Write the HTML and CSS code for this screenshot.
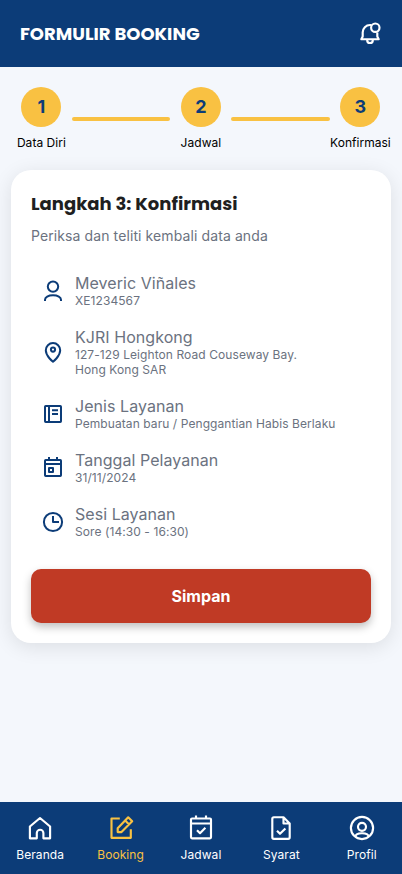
FILE: index.html
```html
<!DOCTYPE html>
<html lang="id">
<head>
<meta charset="utf-8">
<meta name="viewport" content="width=device-width, initial-scale=1">
<title>Formulir Booking</title>
<link rel="stylesheet" href="styles.css">
</head>
<body>
<div class="app">
  <header class="header">
    <h1 class="header-title">FORMULIR BOOKING</h1>
    <svg class="icon bell" viewBox="0 0 24 24"><path d="M13.400 3H12A7.300 7.300 0 0 0 4.700 10.300V14.600L3.300 17.200h17.400L19.300 14.600v-4M9.200 17.400v.8a2.800 2.800 0 0 0 5.600 0v-.8"/><circle cx="17.300" cy="5.700" r="4.200"/></svg>
  </header>
  <main class="main">
    <div class="steps">
      <div class="step"><span class="step-number">1</span><span class="step-label">Data Diri</span></div>
      <span class="step-line"></span>
      <div class="step"><span class="step-number">2</span><span class="step-label">Jadwal</span></div>
      <span class="step-line"></span>
      <div class="step"><span class="step-number">3</span><span class="step-label">Konfirmasi</span></div>
    </div>
    <section class="card">
      <h2 class="card-title">Langkah 3: Konfirmasi</h2>
      <p class="card-intro">Periksa dan teliti kembali data anda</p>
      <ul class="details">
        <li class="detail">
          <svg class="icon" viewBox="0 0 24 24"><circle cx="12" cy="7.600" r="5.200"/><path d="M4 22v-1.200c0-2.500 3.200-4.500 8-4.500s8 2 8 4.500V22"/></svg>
          <div><div class="name">Meveric Viñales</div><div class="value">XE1234567</div></div>
        </li>
        <li class="detail">
          <svg class="icon" viewBox="0 0 24 24"><path d="M12 20.700S4.800 15.300 4.800 9.300a7.200 7.200 0 0 1 14.400 0c0 6-7.200 11.400-7.200 11.400z"/><circle cx="12" cy="8.600" r="2.100"/></svg>
          <div><div class="name">KJRI Hongkong</div><div class="value">127-129 Leighton Road Couseway Bay.<br>Hong Kong SAR</div></div>
        </li>
        <li class="detail">
          <svg class="icon" viewBox="0 0 24 24"><rect x="4" y="4" width="16" height="16" rx=".7"/><path d="M8 4v16M11 8.300h6M11 12h6"/></svg>
          <div><div class="name">Jenis Layanan</div><div class="value">Pembuatan baru / Penggantian Habis Berlaku</div></div>
        </li>
        <li class="detail">
          <svg class="icon" viewBox="0 0 24 24"><rect x="4" y="4" width="16" height="16" rx=".7"/><path d="M4 8h16M8 1v3M16 1v3"/><rect x="8" y="12" width="4" height="4"/></svg>
          <div><div class="name">Tanggal Pelayanan</div><div class="value">31/11/2024</div></div>
        </li>
        <li class="detail">
          <svg class="icon" viewBox="0 0 24 24"><circle cx="12" cy="12" r="9.100"/><path d="M12 6v6h6"/></svg>
          <div><div class="name">Sesi Layanan</div><div class="value">Sore (14:30 - 16:30)</div></div>
        </li>
      </ul>
      <button class="save" type="button">Simpan</button>
    </section>
  </main>
  <nav class="nav">
    <a class="nav-item"><svg class="icon" viewBox="0 0 24 24"><path d="M1.900 22.300V10.500L12 2l10.100 8.500v11.800h-6.700V17a3.300 3.300 0 0 0-6.600 0v5.300z"/></svg><span>Beranda</span></a>
    <a class="nav-item active"><svg class="icon" viewBox="0 0 24 24"><path d="M10.800 2.500H2.500v19.300h19.300v-8.600M8.700 12.300L19.200 1.300l4 4-10.700 10.800H8.700zM16.200 4.500l3.900 3.900"/></svg><span>Booking</span></a>
    <a class="nav-item"><svg class="icon" viewBox="0 0 24 24"><rect x="2" y="2.500" width="20" height="19.800" rx="1"/><path d="M2 7.500h20M7-.5v3.500M17-.5v3.500M8 14.200l3 3 5.400-5.400"/></svg><span>Jadwal</span></a>
    <a class="nav-item"><svg class="icon" viewBox="0 0 24 24"><path d="M14.500 1.200H4.800a1.500 1.500 0 0 0-1.500 1.500v18.600a1.500 1.500 0 0 0 1.500 1.500h14.400a1.500 1.500 0 0 0 1.500-1.500V7.500zM14.500 1.200v6.300h6.200M8 14.800l3 3 5.400-5.400"/></svg><span>Syarat</span></a>
    <a class="nav-item"><svg class="icon" viewBox="0 0 24 24"><circle cx="12" cy="12" r="11.100"/><circle cx="12" cy="10.800" r="4"/><path d="M5.300 20.800c0-2.300 2.700-3.600 6.700-3.600s6.700 1.300 6.700 3.600"/></svg><span>Profil</span></a>
  </nav>
</div>
</body>
</html>
```
FILE: styles.css
```css
* { box-sizing: border-box; }
body { margin: 0; font-family: Inter, sans-serif; background: #f4f7fc; }
h1, h2, p, ul { margin: 0; padding: 0; }
.app { min-height: 874px; display: flex; flex-direction: column; }
.icon { width: 24px; height: 24px; flex: none; fill: none; stroke: currentColor; stroke-width: 2.15; stroke-linejoin: round; overflow: visible; }
.header { height: 67px; padding: 0 20px; display: flex; align-items: center; justify-content: space-between; background: #0c3c78; color: #fff; }
.header-title, .card-title { font-family: Poppins, Inter, sans-serif; font-size: 18px; line-height: 27px; font-weight: 700; white-space: nowrap; }
.main { flex: 1; padding: 20px 11px 0; }
.steps { display: flex; gap: 10.5px; padding: 0 10.6px 0 10.4px; height: 83px; }
.step { width: 40px; display: flex; flex-direction: column; align-items: center; }
.step-number { width: 40px; height: 40px; flex: none; padding-bottom: 1px; border-radius: 50%; background: #f9c142; color: #0c3c78; display: grid; place-items: center; font-size: 18px; font-weight: 700; }
.step-label { margin-top: 8px; font-size: 12px; line-height: 15px; white-space: nowrap; color: #000; letter-spacing: .03px; }
.step-line { flex: 1; height: 4px; margin-top: 29.5px; border-radius: 2px; background: #f9c142; }
.card { padding: 20px; border-radius: 20px; background: #fff; box-shadow: 0 4px 20px rgba(0, 0, 0, .1); }
.card-title { color: #1f1f1f; }
.card-intro { margin-top: 10px; font-size: 14px; line-height: 17px; color: #6b7280; letter-spacing: .1px; }
.details { list-style: none; margin-top: 30px; padding-left: 10px; display: grid; gap: 20px; }
.detail { display: flex; align-items: center; gap: 10px; color: #6b7280; }
.detail .icon { color: #0c3c78; stroke-width: 2; }
.name { font-size: 16px; line-height: 19px; letter-spacing: .05px; }
.value { font-size: 12px; line-height: 15px; letter-spacing: .08px; }
.save { display: block; width: 100%; height: 54px; margin-top: 30px; padding: 0 0 1px; border: 0; border-radius: 10px; background: #c03a25; color: #fff; font: 700 16px Inter, sans-serif; box-shadow: 0 4px 8px rgba(0, 0, 0, .25); }
.nav { height: 72px; display: grid; grid-template-columns: repeat(5, 1fr); background: #0c3c78; color: #fff; }
.nav-item { display: flex; flex-direction: column; align-items: center; padding-top: 14px; gap: 7px; font-size: 12px; line-height: 15px; letter-spacing: .08px; }
.nav-item.active { color: #f9c142; }
```
